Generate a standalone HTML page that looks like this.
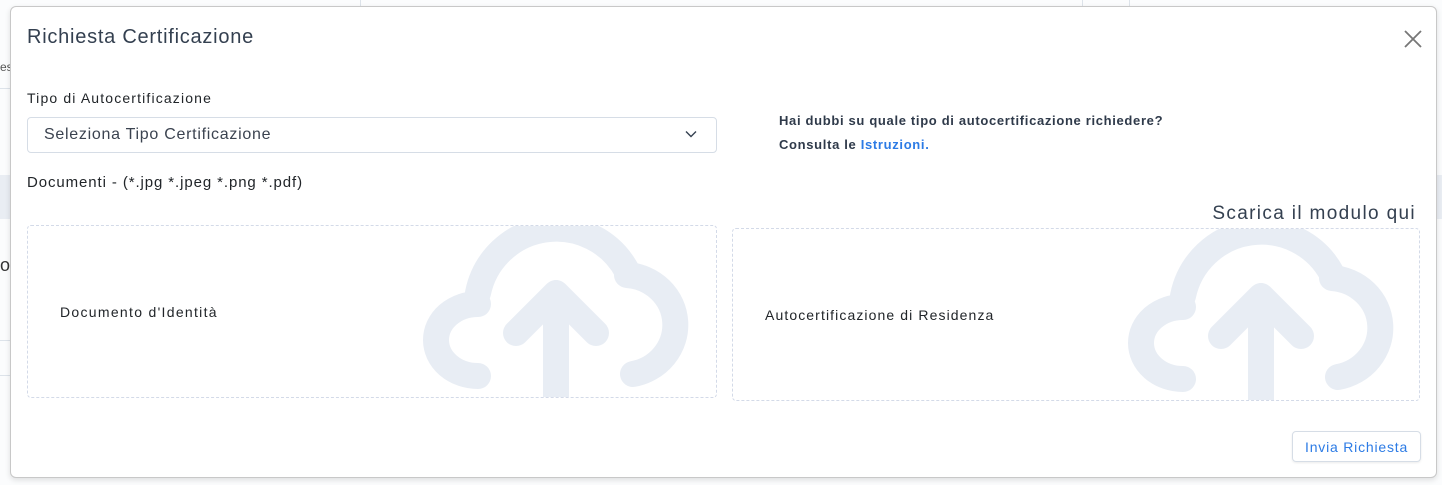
<!DOCTYPE html>
<html><head><meta charset="utf-8"><style>
*{margin:0;padding:0;box-sizing:border-box}
body{width:1442px;height:485px;overflow:hidden;background:#fff;font-family:"Liberation Sans",sans-serif;position:relative;color:#212529}
.bg{position:absolute}
.modal{position:absolute;left:10px;top:6px;width:1427px;height:472px;background:#fff;border:1px solid #c8c8c8;border-radius:6px;box-shadow:0 2px 6px rgba(0,0,0,.12);overflow:hidden}
.t{position:absolute;white-space:nowrap}
.box{position:absolute;border:1px dashed #d3dae8;border-radius:4px;overflow:hidden}
.box svg{position:absolute;left:0;top:0}
</style></head><body>
<div class="bg" style="left:0;top:0;width:1442px;height:485px;background:#fbfcfd"></div>
<div class="bg" style="left:0;top:175px;width:12px;height:44px;background:#e9edf3"></div>
<div class="bg" style="left:1436px;top:175px;width:6px;height:44px;background:#e9edf3"></div>
<div class="t" style="left:0;top:255px;font-size:18px;color:#333">or</div>
<div class="t" style="left:0;top:60px;font-size:12px;color:#555">es</div>
<div class="bg" style="left:0;top:88px;width:12px;height:1px;background:#dde3ea"></div>
<div class="bg" style="left:0;top:340px;width:12px;height:1px;background:#dde3ea"></div>
<div class="bg" style="left:0;top:375px;width:12px;height:1px;background:#dde3ea"></div>
<div class="bg" style="left:360px;top:0;width:1px;height:6px;background:#dde3ea"></div>
<div class="bg" style="left:1082px;top:0;width:1px;height:6px;background:#dde3ea"></div>
<div class="bg" style="left:1129px;top:0;width:1px;height:6px;background:#dde3ea"></div>

<div class="modal">
 <div class="t" style="left:16px;top:19px;font-size:20px;color:#344050;letter-spacing:0.75px">Richiesta Certificazione</div>
 <svg style="position:absolute;left:1392px;top:22px" width="20" height="20" viewBox="0 0 20 20"><path d="M2 2L18 18M18 2L2 18" stroke="#777" stroke-width="1.8"/></svg>
 <div class="t" style="left:16px;top:83px;font-size:14px;color:#212529;letter-spacing:1.15px">Tipo di Autocertificazione</div>
 <div style="position:absolute;left:16px;top:110px;width:690px;height:36px;border:1px solid #d6dde6;border-radius:4px"></div>
 <div class="t" style="left:33px;top:119px;font-size:16px;color:#3b4350;letter-spacing:0.72px">Seleziona Tipo Certificazione</div>
 <svg style="position:absolute;left:674px;top:123px" width="12" height="8" viewBox="0 0 12 8"><path d="M1 1.5L6 6.5L11 1.5" stroke="#344050" stroke-width="1.4" fill="none"/></svg>
 <div class="t" style="left:768px;top:106px;font-size:13px;font-weight:bold;color:#2f3a4a;letter-spacing:0.67px">Hai dubbi su quale tipo di autocertificazione richiedere?</div>
 <div class="t" style="left:768px;top:130px;font-size:13px;font-weight:bold;color:#2f3a4a;letter-spacing:0.67px">Consulta le <span style="color:#2c7be5">Istruzioni.</span></div>
 <div class="t" style="left:16px;top:167px;font-size:15px;color:#212529;letter-spacing:0.9px">Documenti - (*.jpg *.jpeg *.png *.pdf)</div>
 <div class="t" style="right:20px;top:196px;font-size:19px;color:#344050;letter-spacing:1.35px">Scarica il modulo qui</div>

 <div class="box" style="left:16px;top:218px;width:690px;height:173px">
  <svg width="690" height="173" viewBox="27 225 690 173"><g stroke="#e8edf4" stroke-width="26" fill="none" stroke-linecap="round" stroke-linejoin="round">
   <path d="M477 375A42 36 0 0 1 477 303"/>
   <path d="M477 292A80 80 0 0 1 626 270"/>
   <path d="M626 274A52 50 0 0 1 632 373"/>
   <path d="M555 400L555 292M515 332L555 292L595 332"/>
  </g></svg>
  <div class="t" style="left:32px;top:78px;font-size:14px;color:#212529;letter-spacing:1.3px">Documento d'Identità</div>
 </div>
 <div class="box" style="left:721px;top:221px;width:688px;height:173px">
  <svg width="688" height="173" viewBox="27 225 688 173"><g stroke="#e8edf4" stroke-width="26" fill="none" stroke-linecap="round" stroke-linejoin="round">
   <path d="M477 375A42 36 0 0 1 477 303"/>
   <path d="M477 292A80 80 0 0 1 626 270"/>
   <path d="M626 274A52 50 0 0 1 632 373"/>
   <path d="M555 400L555 292M515 332L555 292L595 332"/>
  </g></svg>
  <div class="t" style="left:32px;top:78px;font-size:14px;color:#212529;letter-spacing:1.1px">Autocertificazione di Residenza</div>
 </div>
 <div style="position:absolute;left:1281px;top:424px;width:129px;height:31px;border:1px solid #d6dde6;border-radius:4px;box-shadow:0 1px 2px rgba(0,0,0,.08)"></div>
 <div class="t" style="left:1294px;top:432px;font-size:14px;color:#2c7be5;letter-spacing:0.8px">Invia Richiesta</div>
</div>
</body></html>
